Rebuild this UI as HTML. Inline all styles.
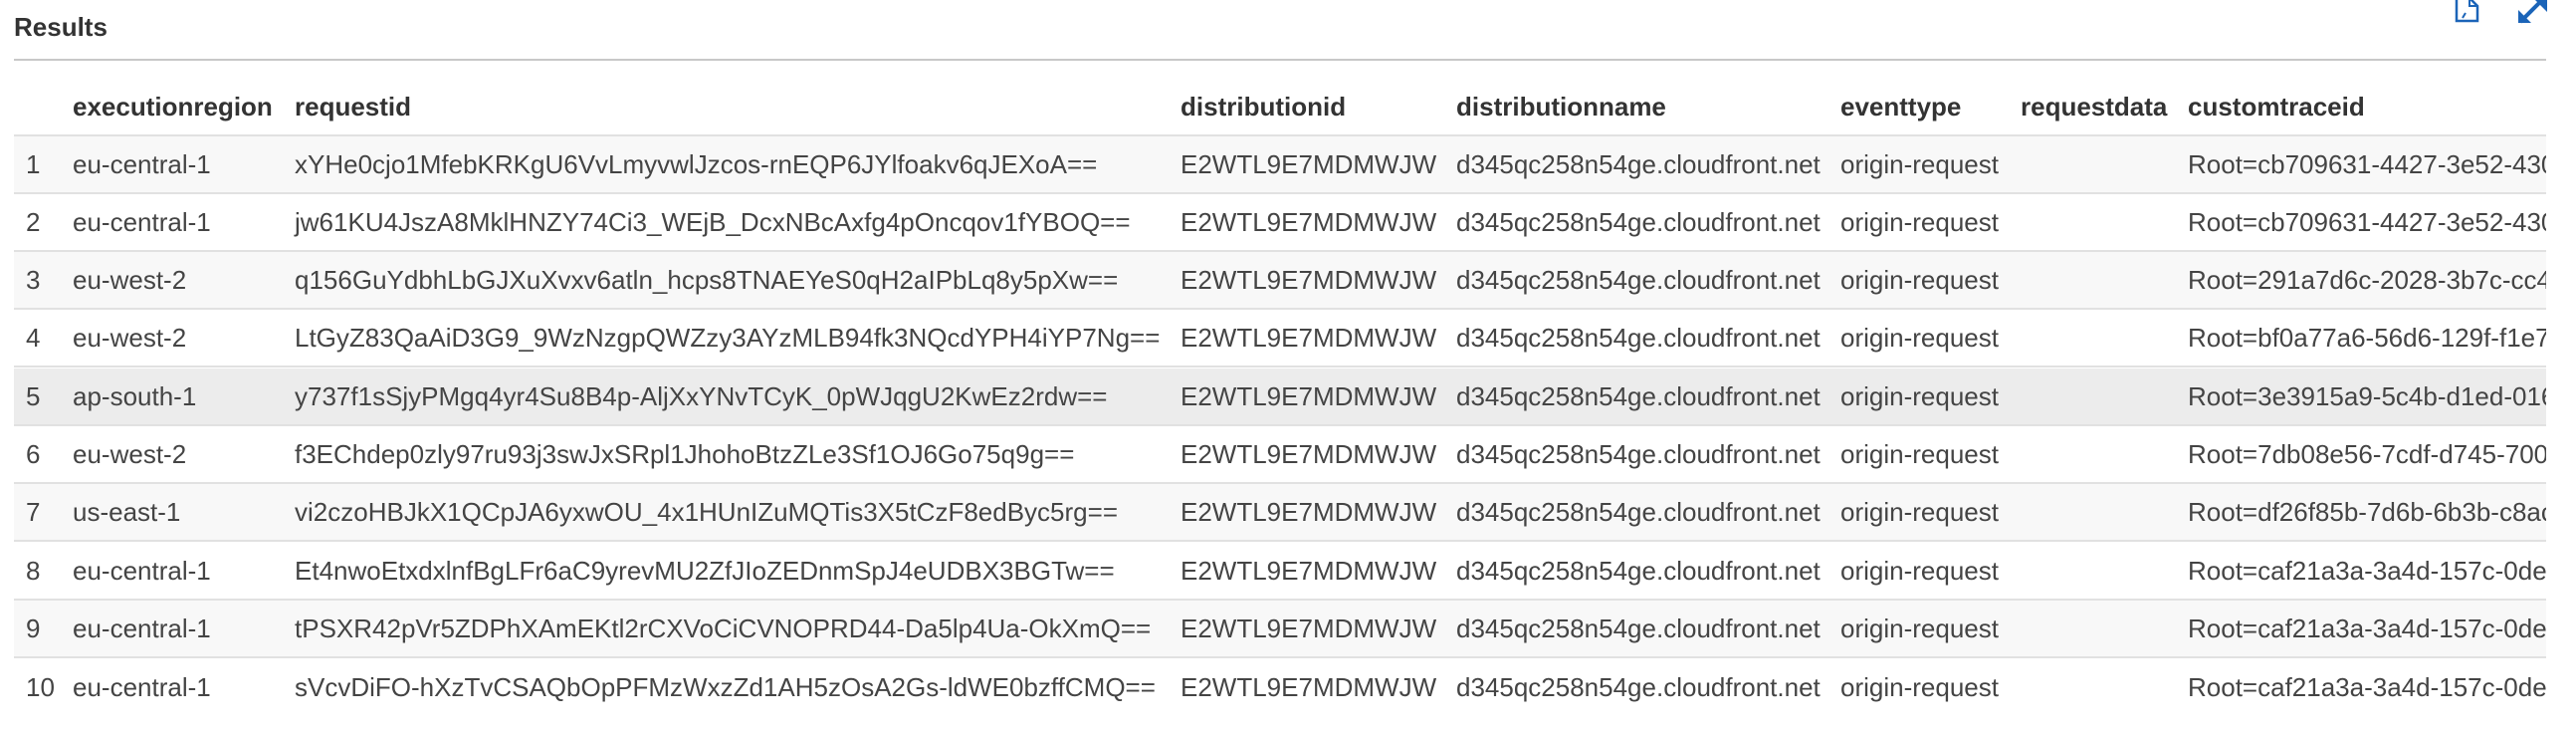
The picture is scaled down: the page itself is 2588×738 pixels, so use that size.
<!DOCTYPE html>
<html><head><meta charset="utf-8"><style>
html,body{margin:0;padding:0;width:2588px;height:738px;background:#fff;overflow:hidden;font-family:"Liberation Sans",Arial,sans-serif;}
.title{position:absolute;left:14px;top:12px;font-size:26px;font-weight:bold;color:#333;}
.rule{position:absolute;left:14px;top:59px;width:2544px;height:2px;background:#c8c8c8;}
.tbl{position:absolute;left:14px;top:78px;width:2544px;height:660px;overflow:hidden;}
.row{position:absolute;left:0;width:2544px;height:56px;border-bottom:2px solid #e1e1e1;font-size:26px;color:#444;white-space:nowrap;}
.row span{position:absolute;top:0;line-height:56px;}
.hd{font-weight:bold;color:#333;height:57px;}
.hd span{line-height:58px;}
.odd{background:#f8f8f8;}
.hov{background:#ececec;}
.last{border-bottom:none;}
.c0{left:12px}.c1{left:59px}.c2{left:282px}.c3{left:1172px}.c4{left:1449px}.c5{left:1835px}.c6{left:2016px}.c7{left:2184px}
</style></head><body>
<div class="title">Results</div>
<svg style="position:absolute;left:2466px;top:0" width="26" height="23" viewBox="0 0 26 23"><path d="M2 -2 V21 H23 V6 L15 -2" fill="none" stroke="#1b64b8" stroke-width="2.5"/><path d="M8 18 L11 13 M15 -2 V6 H23" fill="none" stroke="#1b64b8" stroke-width="2"/></svg>
<svg style="position:absolute;left:2528px;top:0" width="32" height="24" viewBox="0 0 32 24"><path d="M4 22 L28 -2" stroke="#1b64b8" stroke-width="4"/><path d="M2 10 V23 H15 Z" fill="#1b64b8"/><path d="M18 -1 H31 V12 Z" fill="#1b64b8"/></svg>
<div class="rule"></div>
<div class="tbl">
<div class="row hd" style="top:0"><span class="c1">executionregion</span><span class="c2">requestid</span><span class="c3">distributionid</span><span class="c4">distributionname</span><span class="c5">eventtype</span><span class="c6">requestdata</span><span class="c7">customtraceid</span></div>
<div class="row odd" style="top:59px"><span class="c0">1</span><span class="c1">eu-central-1</span><span class="c2">xYHe0cjo1MfebKRKgU6VvLmyvwlJzcos-rnEQP6JYlfoakv6qJEXoA==</span><span class="c3">E2WTL9E7MDMWJW</span><span class="c4">d345qc258n54ge.cloudfront.net</span><span class="c5">origin-request</span><span class="c7">Root=cb709631-4427-3e52-430c</span></div>
<div class="row" style="top:117px"><span class="c0">2</span><span class="c1">eu-central-1</span><span class="c2">jw61KU4JszA8MklHNZY74Ci3_WEjB_DcxNBcAxfg4pOncqov1fYBOQ==</span><span class="c3">E2WTL9E7MDMWJW</span><span class="c4">d345qc258n54ge.cloudfront.net</span><span class="c5">origin-request</span><span class="c7">Root=cb709631-4427-3e52-430c</span></div>
<div class="row odd" style="top:175px"><span class="c0">3</span><span class="c1">eu-west-2</span><span class="c2">q156GuYdbhLbGJXuXvxv6atln_hcps8TNAEYeS0qH2aIPbLq8y5pXw==</span><span class="c3">E2WTL9E7MDMWJW</span><span class="c4">d345qc258n54ge.cloudfront.net</span><span class="c5">origin-request</span><span class="c7">Root=291a7d6c-2028-3b7c-cc4a</span></div>
<div class="row" style="top:233px"><span class="c0">4</span><span class="c1">eu-west-2</span><span class="c2">LtGyZ83QaAiD3G9_9WzNzgpQWZzy3AYzMLB94fk3NQcdYPH4iYP7Ng==</span><span class="c3">E2WTL9E7MDMWJW</span><span class="c4">d345qc258n54ge.cloudfront.net</span><span class="c5">origin-request</span><span class="c7">Root=bf0a77a6-56d6-129f-f1e7</span></div>
<div class="row hov" style="top:292px"><span class="c0">5</span><span class="c1">ap-south-1</span><span class="c2">y737f1sSjyPMgq4yr4Su8B4p-AljXxYNvTCyK_0pWJqgU2KwEz2rdw==</span><span class="c3">E2WTL9E7MDMWJW</span><span class="c4">d345qc258n54ge.cloudfront.net</span><span class="c5">origin-request</span><span class="c7">Root=3e3915a9-5c4b-d1ed-0166</span></div>
<div class="row" style="top:350px"><span class="c0">6</span><span class="c1">eu-west-2</span><span class="c2">f3EChdep0zly97ru93j3swJxSRpl1JhohoBtzZLe3Sf1OJ6Go75q9g==</span><span class="c3">E2WTL9E7MDMWJW</span><span class="c4">d345qc258n54ge.cloudfront.net</span><span class="c5">origin-request</span><span class="c7">Root=7db08e56-7cdf-d745-7000</span></div>
<div class="row odd" style="top:408px"><span class="c0">7</span><span class="c1">us-east-1</span><span class="c2">vi2czoHBJkX1QCpJA6yxwOU_4x1HUnIZuMQTis3X5tCzF8edByc5rg==</span><span class="c3">E2WTL9E7MDMWJW</span><span class="c4">d345qc258n54ge.cloudfront.net</span><span class="c5">origin-request</span><span class="c7">Root=df26f85b-7d6b-6b3b-c8ac</span></div>
<div class="row" style="top:467px"><span class="c0">8</span><span class="c1">eu-central-1</span><span class="c2">Et4nwoEtxdxlnfBgLFr6aC9yrevMU2ZfJIoZEDnmSpJ4eUDBX3BGTw==</span><span class="c3">E2WTL9E7MDMWJW</span><span class="c4">d345qc258n54ge.cloudfront.net</span><span class="c5">origin-request</span><span class="c7">Root=caf21a3a-3a4d-157c-0de1</span></div>
<div class="row odd" style="top:525px"><span class="c0">9</span><span class="c1">eu-central-1</span><span class="c2">tPSXR42pVr5ZDPhXAmEKtl2rCXVoCiCVNOPRD44-Da5lp4Ua-OkXmQ==</span><span class="c3">E2WTL9E7MDMWJW</span><span class="c4">d345qc258n54ge.cloudfront.net</span><span class="c5">origin-request</span><span class="c7">Root=caf21a3a-3a4d-157c-0de1</span></div>
<div class="row last" style="top:584px"><span class="c0">10</span><span class="c1">eu-central-1</span><span class="c2">sVcvDiFO-hXzTvCSAQbOpPFMzWxzZd1AH5zOsA2Gs-ldWE0bzffCMQ==</span><span class="c3">E2WTL9E7MDMWJW</span><span class="c4">d345qc258n54ge.cloudfront.net</span><span class="c5">origin-request</span><span class="c7">Root=caf21a3a-3a4d-157c-0de1</span></div>
</div>
</body></html>
